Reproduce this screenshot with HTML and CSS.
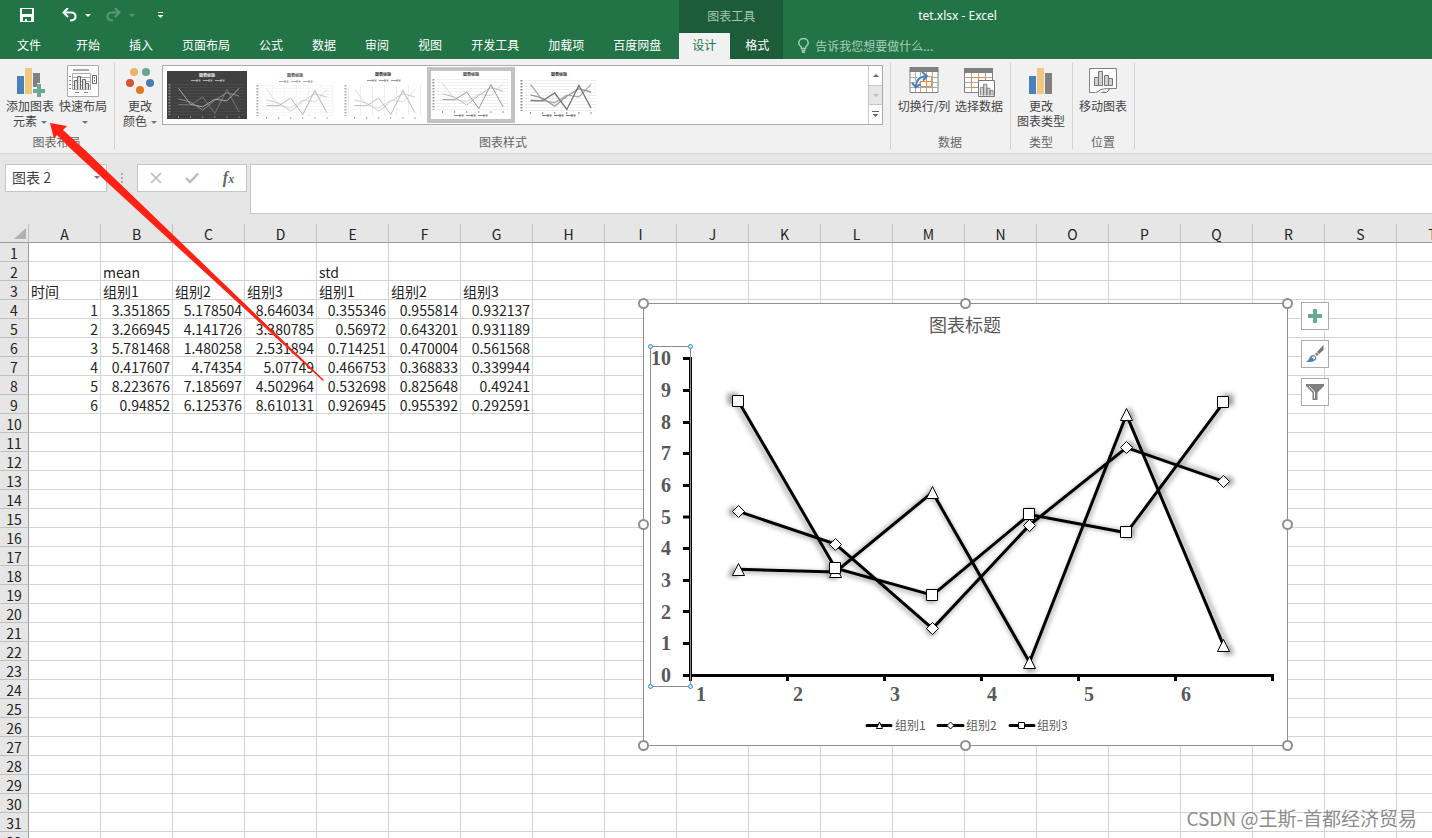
FILE: index.html
```html
<!DOCTYPE html>
<html lang="zh-CN">
<head>
<meta charset="utf-8">
<title>tet.xlsx - Excel</title>
<link rel="stylesheet" href="styles.css">
</head>
<body>
<svg class="defs" width="0" height="0" aria-hidden="true">
  <defs>
    <g id="mini-faint"><polyline points="0,4.3 12.1,20.4 24.2,22.9 36.3,15.2 48.4,16.9 60.5,4.4"/></g>
    <g id="mini-mid"><polyline points="0,14.9 12.1,18.1 24.2,26.2 36.3,16.3 48.4,8.7 60.5,12"/></g>
    <g id="mini-strong"><polyline points="0,20.5 12.1,20.8 24.2,13 36.3,29.5 48.4,5.5 60.5,27.9"/></g>
    <g id="mini-grid"><path d="M-6 .5H66M-6 3.5H66M-6 6.5H66M-6 9.5H66M-6 12.5H66M-6 15.5H66M-6 18.5H66M-6 21.5H66M-6 24.5H66M-6 27.5H66M-6 30.5H66"/></g>
    <g id="mini-cols"><path d="M-6 0V30M6 0V30M18 0V30M30 0V30M42 0V30M54 0V30M66 0V30"/></g>
    <g id="mini-axis"><path d="M-9 0V31" stroke-width="2" stroke-dasharray="1.5 1.5"/><path d="M0 32V34M12.1 32V34M24.2 32V34M36.3 32V34M48.4 32V34M60.5 32V34"/></g>
    <g id="mini-legend"><path d="M0 0H5M12 0H17M24 0H29"/><path d="M5 0H10M17 0H22M29 0H34" stroke-width="2" stroke-dasharray="2 .5"/></g>
    <g id="bars-small"><path d="M3 18V8h4v10M7 18V4h4v14M11 18V9h4v9M15 18v-6h4v6" fill="#d0d0d0" stroke="#777"/></g>
  </defs>
</svg>

<header class="top">
  <div class="quick">
    <button class="qa-save" aria-label="保存"><svg width="14" height="14"><path fill="#fff" fill-rule="evenodd" d="M0 0H14V14H0ZM2 1V6H12V1ZM3 9V13H5V11H7V13H11V9Z"/></svg></button>
    <button class="qa-undo" aria-label="撤消"><svg width="15" height="14" fill="none" stroke="#fff" stroke-width="2"><path d="M6 0L1.500 4.500 6 9M2 4.500H9Q13.500 4.500 13.500 8.500T8 12.500"/></svg><i class="caret"></i></button>
    <button class="qa-redo" aria-label="恢复"><svg width="15" height="14" fill="none" stroke="#fff" stroke-width="2"><path d="M9 0L13.500 4.500 9 9M13 4.500H6Q1.500 4.500 1.500 8.500T7 12.500"/></svg><i class="caret"></i></button>
    <button class="qa-more" aria-label="自定义快速访问工具栏"><svg width="7" height="7"><path fill="#fff" d="M1 0H6V1H1ZM.5 3H6.500L3.500 6Z"/></svg></button>
  </div>
  <div class="context-title">图表工具</div>
  <h1 class="title">tet.xlsx - Excel</h1>
  <nav class="tabs">
    <button class="tab file">文件</button><button class="tab">开始</button><button class="tab">插入</button><button class="tab">页面布局</button><button class="tab">公式</button><button class="tab">数据</button><button class="tab">审阅</button><button class="tab">视图</button><button class="tab">开发工具</button><button class="tab">加载项</button><button class="tab">百度网盘</button>
  </nav>
  <nav class="context-tabs"><button class="tab active">设计</button><button class="tab">格式</button></nav>
  <button class="tell"><svg width="11" height="15" fill="none" stroke="#a8cdb7" stroke-width="1.5"><path d="M3.500 10.500Q3.500 8.500 2 7.500Q.8 6.500.8 4.900A4.500 4.200 0 0 1 10.200 4.900Q10.200 6.500 9 7.500Q7.500 8.500 7.500 10.500ZM3.500 12.500H7.500M4 14.300H7"/></svg>告诉我您想要做什么...</button>
</header>

<section class="ribbon">
  <div class="group">
    <div class="tools">
      <button class="tool"><svg width="30" height="32"><path fill="#4a80bb" d="M2 11h7v18H2z"/><path fill="#efc87e" d="M10 3h7v26h-7z"/><path fill="#808080" d="M18 8h7v15h-7z"/><path fill="#f1f1f1" d="M17 22h5v-4h6v4h2v7h-2v3h-6v-2h-5z"/><path fill="#6aa993" d="M22 19h4v5h4v4h-4v4h-4v-4h-4v-4h4z"/></svg><span>添加图表</span><span>元素<i class="caret"></i></span></button>
      <button class="tool"><svg width="32" height="32"><path fill="#fff" stroke="#aaa" d="M.5.5H31.500V31.500H.5z"/><path fill="#aaa" d="M6 4h16v2H6z"/><path fill="none" stroke="#aaa" d="M5.500 8.500H23.500V24.500H5.500zM5 12.500H24M5 16.500H24M5 20.500H24"/><path stroke="#888" d="M2 11.500h2M2 15.500h2M2 19.500h2M2 23.500h2M8 27.500h4M17 27.500h4"/><path fill="#ddd" stroke="#666" d="M7.500 24.500v-9h3v9M10.500 24.500v-13h3v13M15.500 24.500v-10h3v10M18.500 24.500v-6h3v6"/><path fill="#fff" stroke="#666" d="M25.500 10.500h4v8h-4zM27.500 12v1.500M27.500 15v1.500"/></svg><span>快速布局</span><span><i class="caret alone"></i></span></button>
    </div>
    <div class="group-label">图表布局</div>
  </div>

  <div class="group styles">
    <div class="tools">
      <button class="tool colors"><svg width="32" height="32"><circle cx="10" cy="7" r="4" fill="#eab464"/><circle cx="22" cy="7" r="4" fill="#67a58e"/><circle cx="6" cy="18" r="4" fill="#d55538"/><circle cx="26" cy="18" r="4" fill="#4a7db8"/><circle cx="16" cy="25" r="4" fill="#e6771e"/></svg><span>更改</span><span>颜色<i class="caret"></i></span></button>
      <div class="gallery">
        <div class="thumbs">
          <button class="thumb" aria-label="样式 1"><svg width="80" height="48" fill="none"><path fill="#404040" d="M0 0H80V48H0z"/><text x="40" y="6" fill="#eee" class="mini-title">图表标题</text><use href="#mini-legend" x="24" y="9.500" stroke="#aaa" /><g transform="translate(11.500 13)"><use href="#mini-grid" stroke="#494949"/><use href="#mini-axis" stroke="#888"/><use href="#mini-strong" stroke="#777"/><use href="#mini-mid" stroke="#8c8c8c"/><use href="#mini-faint" stroke="#aaa"/></g></svg></button>
          <button class="thumb" aria-label="样式 2"><svg width="80" height="48" fill="none"><text x="40" y="6" fill="#555" class="mini-title">图表标题</text><use href="#mini-legend" x="24" y="10.500" stroke="#aaa"/><g transform="translate(11.500 14)"><use href="#mini-cols" stroke="#f3f3f3"/><use href="#mini-grid" stroke="#f7f7f7"/><use href="#mini-axis" stroke="#aaa"/><use href="#mini-faint" stroke="#ddd"/><use href="#mini-mid" stroke="#ccc"/><use href="#mini-strong" stroke="#b5b5b5"/></g></svg></button>
          <button class="thumb" aria-label="样式 3"><svg width="80" height="48" fill="none"><text x="40" y="5" fill="#333" class="mini-title">图表标题</text><use href="#mini-legend" x="24" y="9.500" stroke="#999"/><g transform="translate(11.500 14)"><use href="#mini-cols" stroke="#eee"/><use href="#mini-axis" stroke="#aaa"/><use href="#mini-faint" stroke="#ddd"/><use href="#mini-mid" stroke="#ccc"/><use href="#mini-strong" stroke="#bbb"/></g></svg></button>
          <button class="thumb selected" aria-label="样式 4"><svg width="80" height="48" fill="none"><text x="40" y="5" fill="#444" class="mini-title">图表标题</text><g transform="translate(11.500 8)"><use href="#mini-grid" stroke="#f0f0f0"/><use href="#mini-axis" stroke="#999"/><use href="#mini-faint" stroke="#d8d8d8"/><use href="#mini-mid" stroke="#bbb"/><use href="#mini-strong" stroke="#999"/></g><use href="#mini-legend" x="23" y="44.500" stroke="#888"/></svg></button>
          <button class="thumb" aria-label="样式 5"><svg width="80" height="48" fill="none"><text x="40" y="5" fill="#333" class="mini-title">图表标题</text><g transform="translate(11.500 9)"><use href="#mini-grid" stroke="#f0f0f0"/><use href="#mini-axis" stroke="#888"/><g stroke-width="1.300"><use href="#mini-faint" stroke="#aaa"/><use href="#mini-mid" stroke="#999"/><use href="#mini-strong" stroke="#777"/></g></g><use href="#mini-legend" x="23" y="44.500" stroke="#777"/></svg></button>
        </div>
        <div class="scroller">
          <button aria-label="上一行"><svg width="6" height="3"><path fill="#666" d="M0 3L3 0 6 3z"/></svg></button>
          <button class="off" aria-label="下一行"><svg width="6" height="3"><path fill="#bbb" d="M0 0L3 3 6 0z"/></svg></button>
          <button aria-label="其他"><svg width="7" height="7"><path fill="#666" d="M0 0H7V1H0zM.5 3L3.500 6 6.500 3z"/></svg></button>
        </div>
      </div>
    </div>
    <div class="group-label">图表样式</div>
  </div>

  <div class="group">
    <div class="tools data">
      <button class="tool wide"><svg width="30" height="32"><path fill="#fff" stroke="#808080" d="M1 5h28v22.500H1z"/><path fill="#808080" d="M.5 2h29v5H.5z"/><path stroke="#aaa" d="M1 12.500H29M1 17.500H29M1 22.500H29M6.500 7V27M11.500 7V27M17.500 7V27M23.500 7V27"/><path fill="#fff" stroke="#e88a3c" d="M11.500 11.500h11v10h-11zM17.500 11.500v10M11.500 16.500h11"/><path stroke="#fff" stroke-width="4" fill="none" d="M7 22Q8 12 17 11"/><path fill="none" stroke="#4a80bb" stroke-width="2" d="M7 22Q7 12 17 11M13 7L18 11 14 15.500M3 18L7 22.500 11.500 19"/></svg><span>切换行/列</span></button>
      <button class="tool"><svg width="32" height="32"><path fill="#fff" stroke="#808080" d="M1.500 5h28v22.500h-28z"/><path fill="#808080" d="M1 3h29v5H1z"/><path stroke="#aaa" d="M2 12.500H29M2 17.500H29M2 22.500H29M8.500 8V27M15.500 8V27M22.500 8V27"/><path fill="none" stroke="#e88a3c" d="M8.500 12.500h14v10h-14zM15.500 12.500v10"/><path fill="#fff" stroke="#777" d="M15.500 15.500h16v16h-16z"/><use href="#bars-small" transform="translate(15 16) scale(.8)"/></svg><span>选择数据</span></button>
    </div>
    <div class="group-label">数据</div>
  </div>
  <div class="group">
    <div class="tools">
      <button class="tool"><svg width="26" height="32"><path fill="#4a80bb" d="M1 11h7v18H1z"/><path fill="#efc87e" d="M9 3h7v26H9z"/><path fill="#808080" d="M17 8h7v21h-7z"/></svg><span>更改</span><span>图表类型</span></button>
    </div>
    <div class="group-label">类型</div>
  </div>
  <div class="group">
    <div class="tools">
      <button class="tool"><svg width="30" height="32"><path fill="#fff" stroke="#808080" d="M1.500 3.500h27v20h-8l-3 4h-4l-3-1-3 1H1.500z"/><path fill="#d0d0d0" stroke="#777" d="M6.500 20.500v-8h4v8zM10.500 20.500v-14h4v14zM16.500 20.500v-10h4v10zM20.500 20.500v-7h4v7z"/><path fill="#fff" stroke="#777" d="M8.500 27.500q4-4 10-4l3 1-3 3q-4-1-5 0"/></svg><span>移动图表</span></button>
    </div>
    <div class="group-label">位置</div>
  </div>
</section>

<section class="formula-bar">
  <div class="name-box"><input aria-label="名称框" value="图表 2"><i class="caret"></i></div>
  <svg class="grip" width="2" height="28"><path fill="#aaa" d="M0 9h2v2H0zM0 13h2v2H0zM0 17h2v2H0z"/></svg>
  <div class="entry-tools">
    <button aria-label="取消"><svg width="12" height="12"><path d="M1 1L11 11M11 1L1 11" stroke="#bbb" stroke-width="1.700"/></svg></button>
    <button aria-label="输入"><svg width="14" height="12"><path d="M1 6L5 10 13 1.500" fill="none" stroke="#bbb" stroke-width="2.400"/></svg></button>
    <button class="fx" aria-label="插入函数">f<small>x</small></button>
  </div>
  <textarea class="formula" aria-label="编辑栏"></textarea>
</section>

<main class="sheet">
  <table class="grid">
    <colgroup><col class="col-head"><col span="20"></colgroup>
    <thead><tr><th class="corner"><svg width="12" height="12"><path d="M12 0V11H0z" fill="#b2b2b2"/></svg></th><th>A</th><th>B</th><th>C</th><th>D</th><th>E</th><th>F</th><th>G</th><th>H</th><th>I</th><th>J</th><th>K</th><th>L</th><th>M</th><th>N</th><th>O</th><th>P</th><th>Q</th><th>R</th><th>S</th><th>T</th></tr></thead>
    <tbody>
      <tr><th>1</th></tr>
      <tr class="text"><th>2</th><td></td><td>mean</td><td></td><td></td><td>std</td></tr>
      <tr class="text"><th>3</th><td>时间</td><td>组别1</td><td>组别2</td><td>组别3</td><td>组别1</td><td>组别2</td><td>组别3</td></tr>
      <tr><th>4</th><td>1</td><td>3.351865</td><td>5.178504</td><td>8.646034</td><td>0.355346</td><td>0.955814</td><td>0.932137</td></tr>
      <tr><th>5</th><td>2</td><td>3.266945</td><td>4.141726</td><td>3.380785</td><td>0.56972</td><td>0.643201</td><td>0.931189</td></tr>
      <tr><th>6</th><td>3</td><td>5.781468</td><td>1.480258</td><td>2.531894</td><td>0.714251</td><td>0.470004</td><td>0.561568</td></tr>
      <tr><th>7</th><td>4</td><td>0.417607</td><td>4.74354</td><td>5.07749</td><td>0.466753</td><td>0.368833</td><td>0.339944</td></tr>
      <tr><th>8</th><td>5</td><td>8.223676</td><td>7.185697</td><td>4.502964</td><td>0.532698</td><td>0.825648</td><td>0.49241</td></tr>
      <tr><th>9</th><td>6</td><td>0.94852</td><td>6.125376</td><td>8.610131</td><td>0.926945</td><td>0.955392</td><td>0.292591</td></tr>
      <tr><th>10</th></tr><tr><th>11</th></tr><tr><th>12</th></tr><tr><th>13</th></tr><tr><th>14</th></tr><tr><th>15</th></tr>
      <tr><th>16</th></tr><tr><th>17</th></tr><tr><th>18</th></tr><tr><th>19</th></tr><tr><th>20</th></tr><tr><th>21</th></tr>
      <tr><th>22</th></tr><tr><th>23</th></tr><tr><th>24</th></tr><tr><th>25</th></tr><tr><th>26</th></tr><tr><th>27</th></tr>
      <tr><th>28</th></tr><tr><th>29</th></tr><tr><th>30</th></tr><tr><th>31</th></tr><tr><th>32</th></tr>
    </tbody>
  </table>

  <svg class="chart" width="660" height="458" viewBox="636 296 660 458" role="img" aria-label="图表标题">
    <defs>
      <filter id="soft" x="-10%" y="-10%" width="120%" height="120%"><feGaussianBlur stdDeviation="2.500"/></filter>
      <path id="tri" d="M0-6L6 6H-6z"/>
      <path id="dia" d="M0-6L6 0 0 6-6 0z"/>
      <path id="sq" d="M-5.500-5.500h11v11h-11z"/>
      <g id="s1"><polyline fill="none" stroke="#000" stroke-width="3" points="738.500,569.300 835.500,572 932.500,492.300 1029.500,662.300 1126.500,414.800 1223.500,645.400"/><use href="#tri" x="738.500" y="569.500"/><use href="#tri" x="835.500" y="571.500"/><use href="#tri" x="932.500" y="492.500"/><use href="#tri" x="1029.500" y="662.500"/><use href="#tri" x="1126.500" y="414.500"/><use href="#tri" x="1223.500" y="645.500"/></g>
      <g id="s2"><polyline fill="none" stroke="#000" stroke-width="3" points="738.500,511.400 835.500,544.200 932.500,628.600 1029.500,525.100 1126.500,447.700 1223.500,481.300"/><use href="#dia" x="738.500" y="511.500"/><use href="#dia" x="835.500" y="544.500"/><use href="#dia" x="932.500" y="628.500"/><use href="#dia" x="1029.500" y="525.500"/><use href="#dia" x="1126.500" y="447.500"/><use href="#dia" x="1223.500" y="481.500"/></g>
      <g id="s3"><polyline fill="none" stroke="#000" stroke-width="3" points="738.500,401.400 835.500,568.300 932.500,595.200 1029.500,514.600 1126.500,532.800 1223.500,402.600"/><use href="#sq" x="738" y="401"/><use href="#sq" x="835" y="568"/><use href="#sq" x="932" y="595"/><use href="#sq" x="1029" y="514"/><use href="#sq" x="1126" y="532"/><use href="#sq" x="1223" y="402"/></g>
    </defs>
    <path fill="#fff" stroke="#8f8f8f" d="M643.500 303.500H1287.500V745.500H643.500z"/>
    <text class="chart-title" x="965" y="332">图表标题</text>
    <g stroke="#000" stroke-width="3" fill="none"><path d="M690.500 357V675.500H1274M683 675.500H690M683 643.500H690M683 611.500H690M683 580.500H690M683 548.500H690M683 517H690M683 485.500H690M683 453.500H690M683 422.500H690M683 390.500H690M683 358.500H690M690.500 675V681M787.500 675V681M884.500 675V681M981.500 675V681M1078.500 675V681M1175.500 675V681M1272.500 675V681"/></g>
    <g class="axis-y"><text x="671" y="365">10</text><text x="671" y="397">9</text><text x="671" y="429">8</text><text x="671" y="460">7</text><text x="671" y="492">6</text><text x="671" y="524">5</text><text x="671" y="555">4</text><text x="671" y="587">3</text><text x="671" y="619">2</text><text x="671" y="650">1</text><text x="671" y="682">0</text></g>
    <g class="axis-x"><text x="701" y="701">1</text><text x="798" y="701">2</text><text x="895" y="701">3</text><text x="992" y="701">4</text><text x="1089" y="701">5</text><text x="1186" y="701">6</text></g>
    <g filter="url(#soft)" opacity=".4"><use href="#s1" transform="translate(-19.600 -10) scale(1.020)"/><use href="#s2" transform="translate(-19.600 -10) scale(1.020)"/><use href="#s3" transform="translate(-19.600 -10) scale(1.020)"/></g>
    <g fill="#fff" stroke="#000"><use href="#s1"/><use href="#s2"/><use href="#s3"/></g>
    <g stroke="#000" stroke-width="3" stroke-linecap="round"><path d="M867 725.500H891M938 725.500H963M1010 725.500H1034"/></g>
    <path fill="#fff" stroke="#000" d="M879.500 722L882.500 728.500H876.500zM950.500 722L954 725.500 950.500 729 947 725.500zM1018.500 722.500h6v6h-6z"/>
    <g class="legend"><text x="895" y="730">组别1</text><text x="966" y="730">组别2</text><text x="1037" y="730">组别3</text></g>
    <path fill="none" stroke="#8c8c8c" d="M650.500 346.500H690.500V686.500H650.500z"/>
    <g fill="#d8ebfa" stroke="#2a8dde"><circle cx="650.500" cy="346.500" r="2"/><circle cx="690.500" cy="346.500" r="2"/><circle cx="650.500" cy="686.500" r="2"/><circle cx="690.500" cy="686.500" r="2"/></g>
    <g fill="#fff" stroke="#8f8f8f" stroke-width="2"><circle cx="643.500" cy="303.500" r="4.500"/><circle cx="965.500" cy="303.500" r="4.500"/><circle cx="1287.500" cy="303.500" r="4.500"/><circle cx="643.500" cy="524.500" r="4.500"/><circle cx="1287.500" cy="524.500" r="4.500"/><circle cx="643.500" cy="745.500" r="4.500"/><circle cx="965.500" cy="745.500" r="4.500"/><circle cx="1287.500" cy="745.500" r="4.500"/></g>
  </svg>

  <div class="chart-actions">
    <button aria-label="图表元素"><svg width="14" height="14"><path fill="#6aa993" d="M5 0h4v5h5v4H9v5H5V9H0V5h5z"/></svg></button>
    <button aria-label="图表样式"><svg width="18" height="18"><path fill="#777" d="M17.500 0V5L13 9 11 7zM10.500 7.500L12.500 9.500 11 11 9 9z"/><path fill="#4a80bb" d="M0 17Q3 15 4 12Q6 9 9 10.500Q11.500 13 9 15.500Q6 17.500 0 17z"/><path fill="#fff" d="M5.500 12.500Q7.500 10.500 9 12Q9.500 14 7.500 14.500Q7.500 12.500 5.500 12.500z"/></svg></button>
    <button aria-label="图表筛选器"><svg width="18" height="16"><path fill="#808080" d="M0 0H18V2L11.500 8.500V16H6.500V8.500L0 2z"/><path fill="none" stroke="#fff" d="M3 2L8.500 8V14.500"/></svg></button>
  </div>
</main>

<svg class="pointer" width="340" height="390" aria-hidden="true"><path fill="#ff2113" d="M50 123L67 126 63 130 85 150 324 380 323 381 72 150 57 135 54 139z"/></svg>
<div class="watermark">CSDN @王斯-首都经济贸易</div>
</body>
</html>
```
FILE: styles.css
```css
* { box-sizing: border-box; }
body {
  margin: 0;
  height: 100vh;
  position: relative;
  display: flex;
  flex-direction: column;
  overflow: hidden;
  font: 12px/15px "Noto Sans CJK SC", sans-serif;
  color: #444;
  background: #e6e6e6;
}
button {
  margin: 0;
  padding: 0;
  border: 0;
  background: none;
  font: inherit;
  color: inherit;
}
svg { display: block; flex: none; }
.defs { position: absolute; }
.caret {
  display: inline-block;
  border: 3px solid transparent;
  border-top-color: #777;
  border-bottom: 0;
}

/* title bar and tabs */
.top {
  display: grid;
  grid-template-columns: auto auto 1fr;
  grid-template-rows: 33px 26px;
  background: #227447;
  color: #fff;
  flex: none;
}
.quick { display: flex; align-items: center; padding: 0 0 3px 20px; }
.quick button { display: flex; align-items: center; gap: 8px; }
.quick .caret { border-top-color: #fff; }
.qa-undo { margin-left: 28px; }
.qa-redo { margin-left: 15px; opacity: .25; }
.qa-more { margin-left: 22px; }
.context-title {
  display: flex;
  align-items: center;
  justify-content: center;
  padding-bottom: 2px;
  background: #1c5c39;
  color: #a5c4b1;
}
.title {
  margin: 0;
  padding-left: 135px;
  font: 12px/31px "Noto Sans", "Noto Sans CJK SC", sans-serif;
}
.tabs { display: flex; padding: 0 4px 0 2px; }
.tab { padding: 0 14px 4px 15px; white-space: nowrap; }
.file { margin-right: 6px; }
.context-tabs { display: flex; background: #1c5c39; }
.active { padding: 0 14px 4px 13px; background: #f1f1f1; color: #227447; }
.tell {
  display: flex;
  align-items: center;
  gap: 6px;
  padding: 0 0 2px 15px;
  color: #a8cdb7;
}

/* ribbon */
.ribbon {
  display: flex;
  padding: 4px 0;
  background: #f1f1f1;
  border-bottom: 1px solid #d5d5d5;
  flex: none;
}
.group {
  display: flex;
  flex-direction: column;
  padding: 0 7px 0 6px;
  border-right: 1px solid #d2d2d2;
}
.tools { display: flex; gap: 5px; height: 72px; padding-top: 2px; }
.data { gap: 4px; }
.group-label { text-align: center; line-height: 14px; color: #666; }
.tool {
  display: flex;
  flex-direction: column;
  align-items: center;
  justify-content: flex-start;
  width: 48px;
  white-space: nowrap;
}
.tool svg { margin-bottom: 1px; }
.tool .caret { margin-left: 4px; vertical-align: 2px; }
.tool .alone { margin-left: 3px; }
.wide { width: 54px; }
.styles { padding-left: 8px; flex: 0 1 776px; }
.colors { width: 34px; }
.gallery {
  flex: 1;
  display: flex;
  height: 60px;
  border: 1px solid #ababab;
  background: #fff;
}
.thumbs { flex: 1; display: flex; padding: 1px 0 0; }
.thumb { width: 88px; height: 56px; border: 4px solid transparent; }
.selected { border-color: #c3c3c3; }
.mini-title { font-size: 4px; font-weight: bold; text-anchor: middle; }
.scroller { width: 14px; display: flex; flex-direction: column; border-left: 1px solid #c6c6c6; }
.scroller button { flex: 1; display: flex; align-items: center; justify-content: center; }
.scroller .off { background: #e6e6e6; border: solid #c6c6c6; border-width: 1px 0; }

/* formula bar */
.formula-bar { display: flex; align-items: flex-start; padding: 10px 0 10px 5px; flex: none; }
.name-box {
  display: flex;
  align-items: center;
  width: 102px;
  height: 28px;
  padding: 0 6px 2px;
  border: 1px solid #c6c6c6;
  background: #fff;
}
.name-box input {
  flex: 1;
  min-width: 0;
  padding: 0;
  border: 0;
  background: none;
  font: 14px/20px "Noto Sans CJK SC", sans-serif;
  color: #444;
}
.grip { margin: 0 14px; }
.entry-tools {
  display: flex;
  align-items: center;
  justify-content: space-around;
  width: 110px;
  height: 28px;
  border: 1px solid #c6c6c6;
  background: #fff;
}
.fx { font: italic bold 16px/20px "Liberation Serif", serif; color: #666; }
.fx small { font-size: 12px; }
.formula {
  flex: 1;
  height: 50px;
  margin-left: 3px;
  padding: 4px;
  border: 1px solid #c6c6c6;
  border-right: 0;
  background: #fff;
  resize: none;
}

/* worksheet */
.sheet { flex: 1; min-height: 0; position: relative; overflow: hidden; background: #fff; }
.grid {
  width: 1469px;
  table-layout: fixed;
  border-collapse: separate;
  border-spacing: 0;
  font-size: 14px;
  line-height: 18px;
  color: #222;
  background-image: linear-gradient(to left, #d4d4d4 1px, transparent 1px), linear-gradient(to top, #d4d4d4 1px, transparent 1px);
  background-size: 72px 19px;
  background-position: 29px 0;
}
.col-head { width: 29px; }
.grid th, .grid td { height: 19px; padding: 0 3px 0 2px; white-space: nowrap; }
.grid td { text-align: right; }
.text td { text-align: left; }
.grid th { padding: 2px 0 0; line-height: 16px; font-weight: normal; background: #e6e6e6; }
.grid thead th { border-bottom: 1px solid #9b9b9b; border-right: 1px solid #c0c0c0; }
.grid tbody th { border-right: 1px solid #9b9b9b; border-bottom: 1px solid #c0c0c0; }
.corner svg { margin: 0 0 0 14px; }
.chart { position: absolute; left: 636px; top: 72px; }
.chart-title { font-size: 18px; text-anchor: middle; fill: #595959; }
.axis-y, .axis-x { font: bold 20px "Liberation Serif", serif; fill: #595959; }
.axis-y { text-anchor: end; }
.axis-x { text-anchor: middle; }
.legend { font-size: 12px; fill: #595959; }
.chart-actions { position: absolute; left: 1301px; top: 78px; display: flex; flex-direction: column; gap: 10px; }
.chart-actions button {
  display: flex;
  align-items: center;
  justify-content: center;
  width: 28px;
  height: 28px;
  border: 1px solid #ababab;
  background: #fff;
}
.pointer { position: absolute; left: 0; top: 0; pointer-events: none; }
.watermark {
  position: absolute;
  right: 15px;
  bottom: 8px;
  font-size: 19px;
  line-height: 24px;
  color: #8c8c8c;
  text-shadow: 1px 1px 0 #fff;
}
```
